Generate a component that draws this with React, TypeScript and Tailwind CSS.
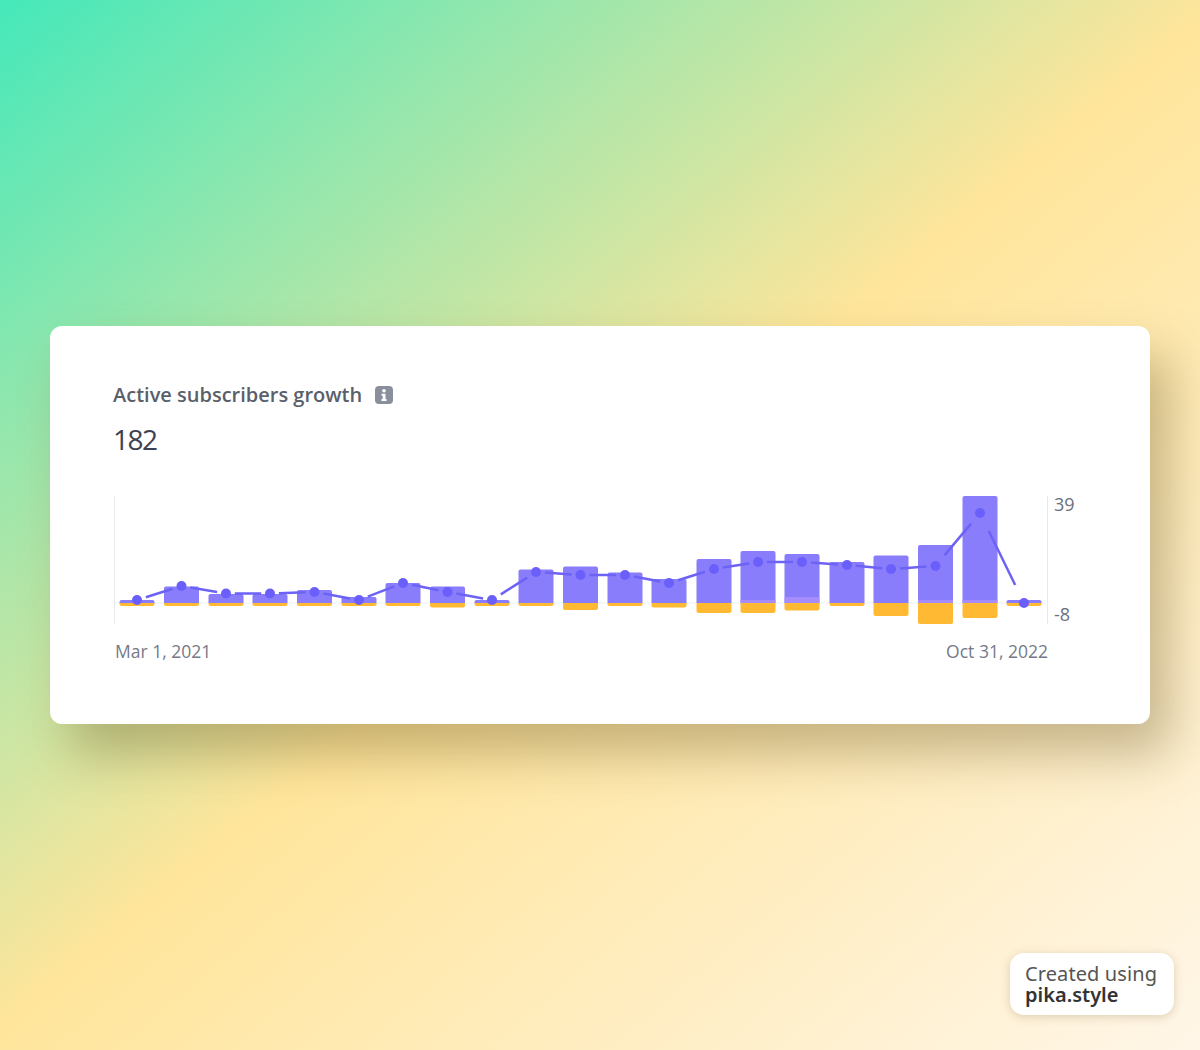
const BARS = [
  { x: 137, top: 600, bottom: 606, dot: 600 },
  { x: 181.5, top: 586.5, bottom: 606, dot: 586 },
  { x: 226, top: 594, bottom: 606, dot: 593.5 },
  { x: 270, top: 594, bottom: 606, dot: 593.5 },
  { x: 314.5, top: 590, bottom: 606, dot: 592 },
  { x: 359, top: 597, bottom: 606, dot: 600 },
  { x: 403, top: 583, bottom: 606, dot: 583 },
  { x: 447.5, top: 586.5, bottom: 607.5, dot: 592 },
  { x: 492, top: 600, bottom: 606, dot: 600 },
  { x: 536, top: 569.5, bottom: 606, dot: 572 },
  { x: 580.5, top: 566.5, bottom: 610, dot: 575 },
  { x: 625, top: 572.5, bottom: 606, dot: 575 },
  { x: 669, top: 579, bottom: 607.5, dot: 583 },
  { x: 714, top: 559, bottom: 613, dot: 569 },
  { x: 758, top: 551, bottom: 613, dot: 562, overlap: 600 },
  { x: 802, top: 554, bottom: 610.5, dot: 562, overlap: 597 },
  { x: 847, top: 562, bottom: 606, dot: 565 },
  { x: 891, top: 555.5, bottom: 616, dot: 569 },
  { x: 935.5, top: 545, bottom: 624, dot: 566, overlap: 600 },
  { x: 980, top: 496, bottom: 618, dot: 513, overlap: 600 },
  { x: 1024, top: 600, bottom: 606, dot: 603 },
];

const BASE = 603;
// each line segment leaves a fifth of its length empty at both ends
const GAP = 0.2;

function Chart() {
  return (
    <svg width="934" height="128" viewBox="114 496 934 128" className="block shrink-0">
      <line x1="114.5" y1="496" x2="114.5" y2="624" stroke="#e8e9ee" />
      <line x1="1047.5" y1="496" x2="1047.5" y2="624" stroke="#e8e9ee" />
      <line x1="114" y1={BASE} x2="1048" y2={BASE} stroke="#eef0fb" />
      {BARS.map((b) => (
        <g key={b.x}>
          <path
            d={`M${b.x - 17.5} ${BASE}H${b.x + 17.5}V${b.bottom - 2}q0 2 -2 2H${b.x - 15.5}q-2 0 -2 -2Z`}
            fill="#ffb933"
          />
          <path
            d={`M${b.x - 17.5} ${BASE}V${b.top + 2}q0 -2 2 -2H${b.x + 15.5}q2 0 2 2V${BASE}Z`}
            fill="#8a7dfc"
          />
          {b.overlap && (
            <rect x={b.x - 17.5} y={b.overlap} width="35" height={BASE - b.overlap} fill="#a78dfb" />
          )}
        </g>
      ))}
      {BARS.slice(1).map((b, i) => {
        const a = BARS[i];
        const dx = (b.x - a.x) * GAP;
        const dy = (b.dot - a.dot) * GAP;
        return (
          <line
            key={b.x}
            x1={a.x + dx}
            y1={a.dot + dy}
            x2={b.x - dx}
            y2={b.dot - dy}
            stroke="#6c63f6"
            strokeWidth="2.5"
          />
        );
      })}
      {BARS.map((b) => (
        <circle key={b.x} cx={b.x} cy={b.dot} r="5" fill="#6a5ffb" />
      ))}
    </svg>
  );
}

export default function App() {
  return (
    <div className="relative h-[1050px] w-[1200px] overflow-hidden bg-[linear-gradient(140deg,#45e8ba_0%,#ffe59b_50%,#fff6e8_100%)] px-[50px] pt-[326px]">
      <div className="h-[398px] w-[1100px] rounded-xl bg-white pl-[63px] pt-[55px] shadow-[20px_30px_50px_rgba(100,80,30,0.36)] font-['Open_Sans',sans-serif]">
        <div className="flex h-7 items-center gap-[13px]">
          <h2 className="text-[20px] font-semibold text-[#5a5f6b]">Active subscribers growth</h2>
          <svg width="18" height="18" viewBox="0 0 18 18">
            <rect width="18" height="18" rx="4" fill="#8a8f9c" />
            <circle cx="9" cy="4.8" r="1.8" fill="#fff" />
            <path d="M6.5 7.8h4v5.2h1v2h-5v-2h1.2V9.8H6.500z" fill="#fff" />
          </svg>
        </div>
        <div className="mt-[11px] text-[28px] font-normal leading-[38px] tracking-[-1.5px] text-[#3c4250]">182</div>
        <div className="ml-px mt-[38px] flex items-stretch">
          <Chart />
          <div className="ml-[6px] flex flex-col justify-between text-[18px] leading-[20px] text-[#6b7080]">
            <span className="mt-[-2px]">39</span>
            <span>-8</span>
          </div>
        </div>
        <div className="ml-[2px] mt-[15px] flex w-[933px] justify-between text-[17.5px] leading-[24px] text-[#757a88]">
          <span>Mar 1, 2021</span>
          <span>Oct 31, 2022</span>
        </div>
      </div>
      <div className="absolute left-[1010px] top-[953px] h-[62px] w-[164px] rounded-[14px] bg-white px-[15px] pt-[10px] font-['Noto_Sans',sans-serif] leading-[21px] shadow-[0_2px_10px_rgba(120,100,60,0.25)]">
        <div className="text-[20px] tracking-[0.1px] text-[#555]">Created using</div>
        <div className="text-[20px] font-semibold text-[#333]">pika.style</div>
      </div>
    </div>
  );
}
